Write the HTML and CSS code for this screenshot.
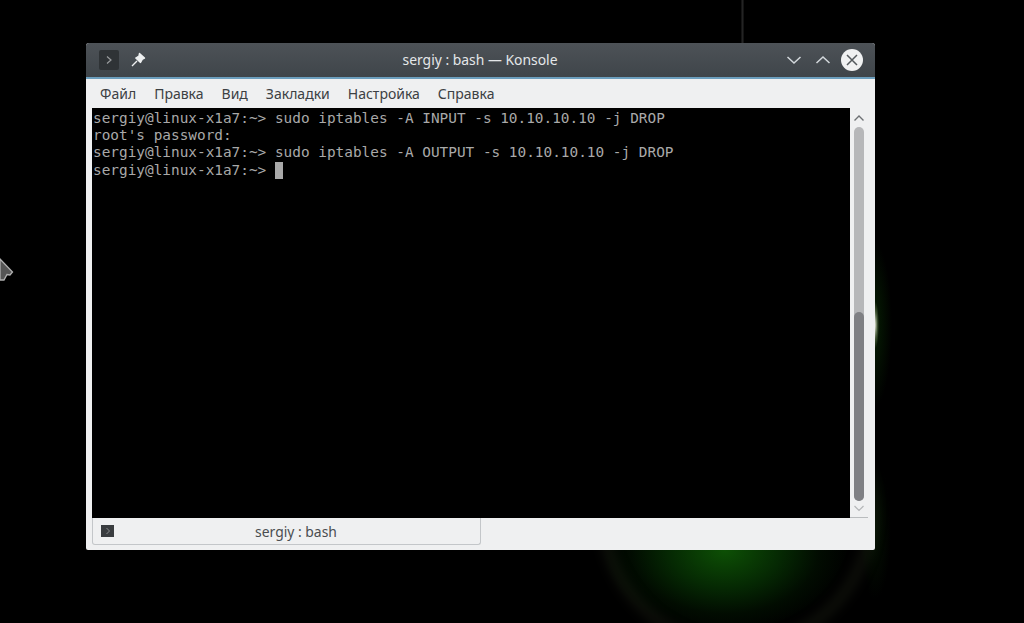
FILE: index.html
```html
<!DOCTYPE html>
<html lang="ru">
<head>
<meta charset="utf-8">
<title>sergiy : bash — Konsole</title>
<link rel="stylesheet" href="styles.css">
</head>
<body>
<div class="desktop">
  <div class="ring"></div>
  <div class="pole"></div>
  <svg class="pointer" width="14" height="30" viewBox="0 0 14 30"><path d="M0 7 L12.5 20 L10 23 L7 22.5 L4 28 L0 28 Z" fill="#555" stroke="#b0b0b0" stroke-width="1.3"/></svg>
  <div class="window">
    <header class="titlebar">
      <div class="title-left">
        <span class="app-icon"><svg width="8" height="10" viewBox="0 0 8 10"><path d="M2 1.5 L6 5 L2 8.5" fill="none" stroke="#9a9c9e" stroke-width="1.2"/></svg></span>
        <svg class="pin" width="16" height="16" viewBox="0 0 16 16"><path d="M9.5 1.5 L14.5 6 L12.5 7 L10.5 10.5 L5.8 6 L9 4 Z M7 9 L2 14" fill="#eef0f1" stroke="#eef0f1" stroke-width="1.4" stroke-linejoin="round"/></svg>
      </div>
      <div class="title-text">sergiy : bash — Konsole</div>
      <div class="title-right">
        <svg width="16" height="10" viewBox="0 0 16 10"><path d="M1.5 2 L8 8 L14.5 2" fill="none" stroke="#d3d8dc" stroke-width="1.5"/></svg>
        <svg width="16" height="10" viewBox="0 0 16 10"><path d="M1.5 8 L8 2 L14.5 8" fill="none" stroke="#d3d8dc" stroke-width="1.5"/></svg>
        <span class="close"><svg width="12" height="12" viewBox="0 0 12 12"><path d="M1 1 L11 11 M11 1 L1 11" stroke="#555a5e" stroke-width="1.5"/></svg></span>
      </div>
    </header>
    <nav class="menubar">
      <span>Файл</span><span>Правка</span><span>Вид</span><span>Закладки</span><span>Настройка</span><span>Справка</span>
    </nav>
    <div class="content">
      <pre class="terminal">sergiy@linux-x1a7:~&gt; sudo iptables -A INPUT -s 10.10.10.10 -j DROP
root's password:
sergiy@linux-x1a7:~&gt; sudo iptables -A OUTPUT -s 10.10.10.10 -j DROP
sergiy@linux-x1a7:~&gt; <span class="cursor"></span></pre>
      <div class="scrollbar">
        <svg class="arrow" width="12" height="8" viewBox="0 0 12 8"><path d="M1.5 6.5 L6 2 L10.5 6.5" fill="none" stroke="#6d7073" stroke-width="1.4"/></svg>
        <div class="track"><div class="thumb"></div></div>
        <svg class="arrow" width="12" height="8" viewBox="0 0 12 8"><path d="M1.5 2 L6 6.5 L10.5 2" fill="none" stroke="#b4b6b8" stroke-width="1.2"/></svg>
      </div>
    </div>
    <div class="tabbar">
      <div class="tab">
        <span class="tab-icon"><svg width="6" height="8" viewBox="0 0 6 8"><path d="M1.5 1 L4.5 4 L1.5 7" fill="none" stroke="#8a8c8e" stroke-width="1"/></svg></span>
        <span class="tab-label">sergiy : bash</span>
      </div>
    </div>
  </div>
</div>
</body>
</html>
```
FILE: styles.css
```css
* { box-sizing: border-box; }
html, body { margin: 0; height: 100%; background: #000; }
body { overflow: hidden; }
.desktop {
  position: relative;
  width: 1024px;
  height: 623px;
  padding: 43px 0 0 86px;
  overflow: hidden;
  background:
    radial-gradient(ellipse 4px 24px at 875px 325px, rgba(232, 236, 218, .95), rgba(120, 140, 100, .5) 60%, rgba(0, 0, 0, 0) 100%),
    radial-gradient(ellipse 125px 85px at 725px 550px, rgba(13, 80, 5, 1), rgba(7, 54, 4, .75) 45%, rgba(3, 24, 2, .5) 75%, rgba(0, 0, 0, 0) 100%),
    radial-gradient(ellipse 19px 85px at 873px 325px, rgba(10, 52, 5, .6), rgba(0, 0, 0, 0) 100%),
    radial-gradient(ellipse 16px 70px at 875px 530px, rgba(10, 40, 6, .4), rgba(0, 0, 0, 0) 100%),
    #000;
}
.ring {
  position: absolute;
  left: 598px;
  top: 373px;
  width: 278px;
  height: 278px;
  border: 9px solid rgba(52, 58, 36, .3);
  border-radius: 50%;
  filter: blur(6px);
}
.pole {
  position: absolute;
  left: 741px;
  top: 0;
  width: 3px;
  height: 43px;
  background: linear-gradient(90deg, #0c0c0c, #242424, #0c0c0c);
}
.pointer { position: absolute; left: 0; top: 252px; }
.window {
  position: relative;
  width: 789px;
  height: 507px;
  display: flex;
  flex-direction: column;
  background: #eff0f1;
  border-radius: 3px 3px 2px 2px;
  font-family: "Noto Sans", "Open Sans", sans-serif;
}
.titlebar {
  height: 36px;
  flex: none;
  display: grid;
  grid-template-columns: 1fr auto 1fr;
  align-items: center;
  padding: 0 12px 0 13px;
  background: linear-gradient(#4d5257, #3f454a);
  border-bottom: 2px solid #6c9fbe;
  border-radius: 3px 3px 0 0;
}
.title-left { display: flex; align-items: center; gap: 11px; }
.app-icon {
  width: 20px;
  height: 20px;
  display: flex;
  align-items: center;
  justify-content: center;
  background: #2f3336;
  border-radius: 2px;
}
.title-text { color: #e4e7e9; font-size: 13.9px; line-height: 18px; margin-right: 2px; }
.title-right { display: flex; align-items: center; justify-content: flex-end; gap: 13px; }
.close {
  width: 22px;
  height: 22px;
  margin-left: -3px;
  display: flex;
  align-items: center;
  justify-content: center;
  background: #f0f1f2;
  border-radius: 50%;
}
.menubar {
  height: 29px;
  flex: none;
  display: flex;
  align-items: center;
  gap: 18px;
  padding: 0 0 0 14px;
  color: #3c4043;
  font-size: 14px;
}
.content { flex: 1; display: flex; margin: 0 7px 0 6px; min-height: 0; }
.terminal {
  flex: none;
  width: 758px;
  margin: 0;
  padding: 1.6px 0 0 1px;
  background: #000;
  color: #a9a9a9;
  font-family: "DejaVu Sans Mono", "Liberation Mono", monospace;
  font-size: 14.4px;
  line-height: 17.4px;
}
.cursor {
  display: inline-block;
  width: 8.5px;
  height: 17px;
  background: #a9a9a9;
  vertical-align: -4px;
}
.scrollbar {
  flex: 1;
  display: flex;
  flex-direction: column;
  align-items: center;
  padding: 6px 0 5px;
  border-bottom: 1px solid #b9bcbe;
}
.arrow { flex: none; }
.track {
  flex: 1;
  width: 10px;
  margin: 5px 0 3px;
  display: flex;
  flex-direction: column;
  justify-content: flex-end;
  background: #b6b7b9;
  border-radius: 5px;
}
.thumb { height: 189px; background: #7f8084; border-radius: 5px; }
.tabbar { height: 32px; flex: none; padding: 0 0 0 6px; }
.tab {
  width: 389px;
  height: 27px;
  display: flex;
  align-items: center;
  padding-left: 8px;
  border: 1px solid #c3c6c9;
  border-top: 0;
  border-radius: 0 0 3px 3px;
}
.tab-icon {
  width: 13px;
  height: 12px;
  display: flex;
  align-items: center;
  justify-content: center;
  background: #3a3d40;
}
.tab-label {
  flex: 1;
  padding-right: 2px;
  text-align: center;
  color: #4a4d50;
  font-size: 13.9px;
}
```
